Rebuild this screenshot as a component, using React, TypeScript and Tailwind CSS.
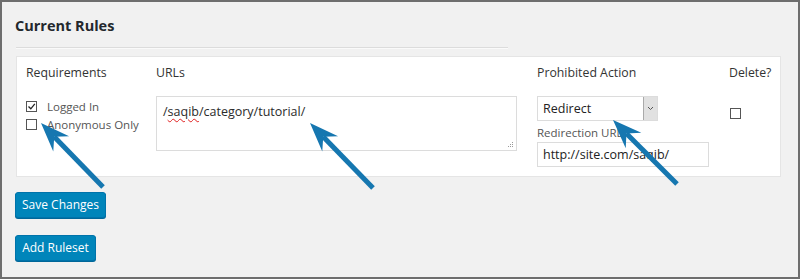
import React from 'react';

const font = { fontFamily: '"Open Sans", "Noto Sans", Arial, sans-serif' };

type Pt = [number, number];

function Arrow({ tip, tail }: { tip: Pt; tail: Pt }) {
  const dx = tail[0] - tip[0];
  const dy = tail[1] - tip[1];
  const len = Math.hypot(dx, dy);
  const ux = dx / len;
  const uy = dy / len;
  const px = -uy;
  const py = ux;
  const headLen = 29;
  const half = 11;
  const notch = 19;
  const w1: Pt = [tip[0] + ux * headLen + px * half, tip[1] + uy * headLen + py * half];
  const w2: Pt = [tip[0] + ux * headLen - px * half, tip[1] + uy * headLen - py * half];
  const n: Pt = [tip[0] + ux * notch, tip[1] + uy * notch];
  return (
    <g>
      <line x1={n[0]} y1={n[1]} x2={tail[0]} y2={tail[1]} stroke="#1677b0" strokeWidth={5} />
      <polygon points={`${tip[0]},${tip[1]} ${w1[0]},${w1[1]} ${n[0]},${n[1]} ${w2[0]},${w2[1]}`} fill="#1677b0" />
    </g>
  );
}

function Checkbox({ checked }: { checked?: boolean }) {
  return (
    <span className="inline-flex h-[11px] w-[11px] shrink-0 items-center justify-center border border-[#555] bg-white">
      {checked && (
        <svg width="9" height="9" viewBox="0 0 9 9">
          <path d="M1.5 4.5 L3.8 6.8 L7.8 1.8" fill="none" stroke="#222" strokeWidth="1.3" />
        </svg>
      )}
    </span>
  );
}

export default function App() {
  return (
    <div
      className="relative h-[279px] w-[800px] overflow-hidden border-2 border-[#6e6e6e] bg-[#f1f1f1] text-[#444]"
      style={font}
    >
      <div className="pl-[13px] pt-[14px]">
        <h2 className="text-[14.5px] leading-[20px] font-bold text-[#23282d]">Current Rules</h2>
      </div>
      <div className="ml-[14px] mt-[11px] w-[492px] border-t border-[#dcdcdc] border-b border-b-[#fafafa]" />

      <div className="ml-[14px] mt-[7px] flex h-[121px] w-[765px] border border-[#e5e5e5] bg-white pl-[9px] pt-[7px]">
        <div className="w-[130px]">
          <div className="text-[12.3px] leading-[18px] text-[#333]">Requirements</div>
          <div className="mt-[18px] flex flex-col gap-[5px] text-[11.5px] leading-[13px] text-[#555]">
            <label className="flex items-center gap-[10px]">
              <Checkbox checked />
              <span>Logged In</span>
            </label>
            <label className="flex items-center gap-[10px]">
              <Checkbox />
              <span>Anonymous Only</span>
            </label>
          </div>
        </div>

        <div className="w-[381px]">
          <div className="text-[12.3px] leading-[18px] text-[#333]">URLs</div>
          <div className="relative mt-[14px] h-[55px] w-[361px] border border-[#dcdcdc] bg-white px-[6px] pt-[5px] text-[12.5px] leading-[20px] text-[#2b2b2b]">
            /<span className="underline decoration-wavy decoration-[#e02020] decoration-1 underline-offset-2">saqib</span>/category/tutorial/
            <svg className="absolute right-[2px] bottom-[2px]" width="6" height="6" viewBox="0 0 6 6">
              <rect x="4" y="0" width="1" height="1" fill="#999" />
              <rect x="2" y="2" width="1" height="1" fill="#999" />
              <rect x="4" y="2" width="1" height="1" fill="#999" />
              <rect x="0" y="4" width="1" height="1" fill="#999" />
              <rect x="2" y="4" width="1" height="1" fill="#999" />
              <rect x="4" y="4" width="1" height="1" fill="#999" />
            </svg>
          </div>
        </div>

        <div className="w-[192px]">
          <div className="text-[12.3px] leading-[18px] text-[#333]">Prohibited Action</div>
          <div className="mt-[14px] flex h-[25px] w-[121px] border border-[#dcdcdc] bg-white">
            <div className="flex-1 pl-[5px] text-[12.5px] leading-[23px] text-[#222]">Redirect</div>
            <div className="flex w-[14px] items-center justify-center border-l border-[#aaa] bg-[#e1e1e1]">
              <svg width="7" height="5" viewBox="0 0 7 5">
                <path d="M1 1 L3.5 3.5 L6 1" fill="none" stroke="#555" strokeWidth="1" />
              </svg>
            </div>
          </div>
          <div className="mt-[4px] text-[11.5px] leading-[15px] text-[#555]">Redirection URL</div>
          <div className="mt-[2px] h-[25px] w-[172px] border border-[#dcdcdc] bg-white pl-[5px] text-[12.5px] leading-[23px] text-[#222]">
            http://site.com/saqib/
          </div>
        </div>

        <div className="flex-1">
          <div className="text-[12.3px] leading-[18px] text-[#333]">Delete?</div>
          <div className="mt-[19px] pl-[1px]">
            <Checkbox />
          </div>
        </div>
      </div>

      <div className="ml-[13px] mt-[15px] flex flex-col items-start gap-[17px]">
        <button className="h-[26px] w-[91px] rounded-[3px] border border-[#0073aa] bg-[#0085ba] text-[12px] leading-[24px] text-white shadow-[0_1px_0_#006799]">
          Save Changes
        </button>
        <button className="h-[26px] w-[81px] rounded-[3px] border border-[#0073aa] bg-[#0085ba] text-[12px] leading-[24px] text-white shadow-[0_1px_0_#006799]">
          Add Ruleset
        </button>
      </div>

      <svg className="pointer-events-none absolute -left-[2px] -top-[2px]" width="800" height="279">
        <Arrow tip={[41, 123]} tail={[103, 187]} />
        <Arrow tip={[310, 123]} tail={[373, 188]} />
        <Arrow tip={[613, 120]} tail={[677, 184]} />
      </svg>
    </div>
  );
}
